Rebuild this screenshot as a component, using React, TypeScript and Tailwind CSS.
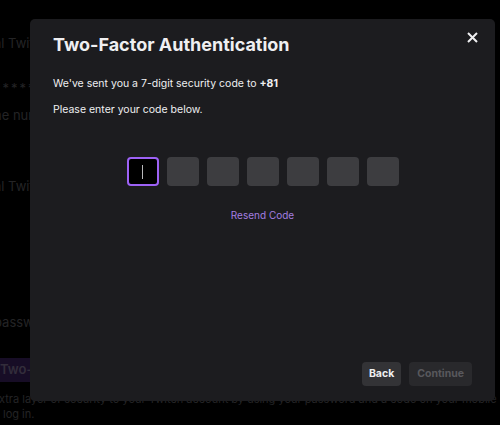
export default function App() {
  const boxes = [0, 1, 2, 3, 4, 5, 6];
  return (
    <div className="relative w-[500px] h-[425px] overflow-hidden bg-black font-['Inter','Liberation_Sans',sans-serif]">
      {/* dimmed settings page behind the modal */}
      <div className="-ml-[6px] text-[13px] text-[#242426] whitespace-nowrap">
        <div className="pt-[35px] leading-[16px]">al Twitch account</div>
        <div className="mt-[29px] leading-[16px] tracking-[2px]">**********</div>
        <div className="mt-[11px] leading-[16px]">he number</div>
        <div className="mt-[55px] leading-[16px]">al Twitch account</div>
        <div className="mt-[120px] leading-[16px]">password</div>
        <div className="mt-[28px] w-[80px] h-[24px] flex items-center pl-[6px] bg-[#170d26] font-semibold text-[#332d3b]">Two-Factor</div>
        <div className="mt-[10px] text-[11px] leading-[15px] pl-[5px]">
          xtra layer of security to your Twitch account by using your password and a code on your mobile
        </div>
        <div className="text-[11px] leading-[15px] pl-[9px]">log in.</div>
      </div>

      {/* modal */}
      <div className="absolute left-[30px] top-[19px] w-[465px] h-[382px] rounded-[5px] bg-[#1c1c1f] flex flex-col px-[23px] pt-[14px] pb-[15px]">
        <div className="flex items-start justify-between">
          <h1 className="text-[18px] leading-[24px] font-bold text-[#efeff1]">Two-Factor Authentication</h1>
          <svg className="mt-[-1px] mr-[-6px]" width="11" height="11" viewBox="0 0 11 11">
            <path d="M1 1l9 9M10 1l-9 9" stroke="#efeff1" strokeWidth="2" />
          </svg>
        </div>
        <p className="mt-[19px] text-[10.5px] leading-[16px] text-[#efeff1]">
          We've sent you a 7-digit security code to <span className="font-bold">+81</span>
        </p>
        <p className="mt-[10px] text-[10.5px] leading-[16px] text-[#efeff1]">Please enter your code below.</p>

        <div className="mt-[39px] flex justify-center gap-[8px]">
          {boxes.map((i) =>
            i === 0 ? (
              <div key={i} className="w-[32px] h-[29px] rounded-[4px] border-2 border-[#9d62f5] bg-black flex items-center justify-center">
                <div className="w-[1px] h-[14px] bg-[#b9b9bb]" />
              </div>
            ) : (
              <div key={i} className="w-[32px] h-[29px] rounded-[4px] bg-[#3d3d40]" />
            )
          )}
        </div>

        <div className="mt-[21px] text-center text-[10px] leading-[16px] text-[#a47ee0]">Resend Code</div>

        <div className="mt-auto flex justify-end gap-[8px]">
          <button className="h-[24px] px-[7px] rounded-[4px] bg-[#333336] text-[10.5px] font-bold text-[#efeff1]">Back</button>
          <button className="h-[24px] px-[8px] rounded-[4px] bg-[#29292c] text-[10.5px] font-bold text-[#58585c]">Continue</button>
        </div>
      </div>
    </div>
  );
}
